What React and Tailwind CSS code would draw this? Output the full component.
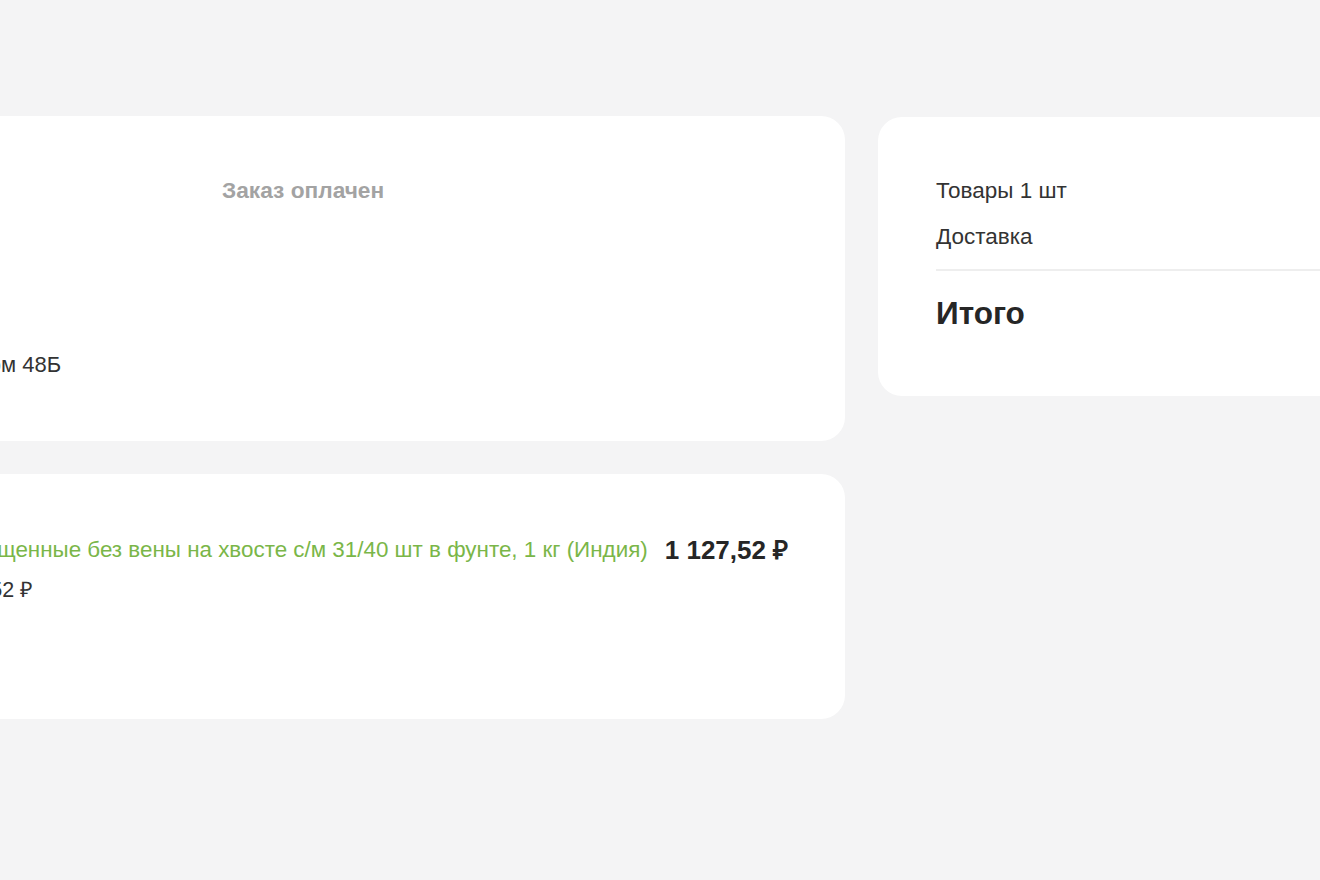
export default function App() {
  return (
    <div className="relative h-[880px] w-full overflow-hidden bg-[#f4f4f5] font-['Liberation_Sans',Arial,sans-serif] text-[#333]">
      <div className="ml-[-150px] flex items-start gap-[33px] pt-[116px]">
        <div className="flex w-[995px] shrink-0 flex-col gap-[33px]">
          <section className="h-[325px] rounded-3xl bg-white pl-[58px] pt-[60px]">
            <div className="flex items-center text-[22.7px] leading-[28px]">
              <span className="w-[314px] shrink-0 text-[#999]">Статус</span>
              <span className="font-bold text-[#a3a3a3]">Заказ оплачен</span>
            </div>
            <div className="mt-[147px] flex items-center text-[22px] leading-[28px]">
              <span className="w-[68px] shrink-0 text-[#999]">Адрес</span>
              <span>дом 48Б</span>
            </div>
          </section>
          <section className="h-[245px] rounded-3xl bg-white pl-[11px] pt-[62px]">
            <div className="flex items-center gap-[17px] leading-[28px]">
              <span className="text-[22.4px] text-[#7ab648]">
                Креветки очищенные без вены на хвосте с/м 31/40 шт в фунте, 1 кг (Индия)
              </span>
              <span className="text-[26px] font-bold text-[#262626]">1 127,52 ₽</span>
            </div>
            <div className="mt-[12px] w-fit text-[21.5px] leading-[28px]">1 шт × 1 127,52 ₽</div>
          </section>
        </div>
        <aside className="mt-[1px] h-[279px] w-[720px] shrink-0 rounded-3xl bg-white px-[58px] pt-[60px]">
          <div className="flex justify-between text-[22.5px] leading-[28px]">
            <span>Товары 1 шт</span>
            <span>1 127,52 ₽</span>
          </div>
          <div className="mt-[18px] flex justify-between text-[22.5px] leading-[28px]">
            <span>Доставка</span>
            <span>0 ₽</span>
          </div>
          <div className="mt-[18px] h-[2px] bg-[#eeeeee]" />
          <div className="mt-[24px] flex justify-between text-[31.5px] font-bold leading-[36px] text-[#262626]">
            <span>Итого</span>
            <span>1 127,52 ₽</span>
          </div>
        </aside>
      </div>
    </div>
  );
}
